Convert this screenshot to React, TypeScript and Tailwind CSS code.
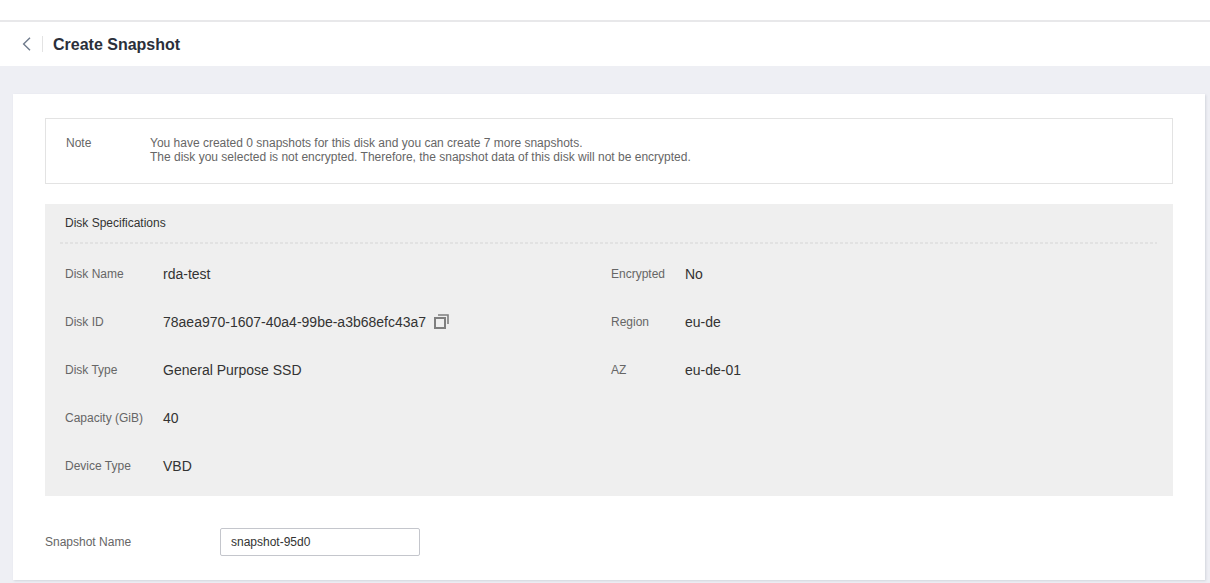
import React from 'react';

const leftRows = [
  ['Disk Name', 'rda-test'],
  ['Disk ID', '78aea970-1607-40a4-99be-a3b68efc43a7'],
  ['Disk Type', 'General Purpose SSD'],
  ['Capacity (GiB)', '40'],
  ['Device Type', 'VBD'],
];

const rightRows = [
  ['Encrypted', 'No'],
  ['Region', 'eu-de'],
  ['AZ', 'eu-de-01'],
];

function BackIcon() {
  return (
    <svg width="9" height="14" viewBox="0 0 9 14" fill="none">
      <path d="M8 0.7L1.6 7L8 13.3" stroke="#6f7b8c" strokeWidth="1.4" />
    </svg>
  );
}

function CopyIcon() {
  return (
    <svg width="15" height="15" viewBox="0 0 15 15" fill="none" className="ml-[8px] -mt-[2px]">
      <rect x="1" y="4" width="10" height="10" stroke="#7f7f7f" strokeWidth="2" />
      <path d="M4 1H14V10" stroke="#7f7f7f" strokeWidth="1.6" />
    </svg>
  );
}

export default function App() {
  return (
    <div className="w-[1210px] h-[583px] overflow-hidden bg-[#eeeff4] font-['Liberation_Sans',Arial,sans-serif]">
      <div className="h-[22px] bg-white border-b-2 border-[#e8e8ea]" />
      <div className="h-[44px] bg-white flex items-center pl-[22px]">
        <BackIcon />
        <div className="ml-[11px] w-px h-[16px] bg-[#e3e3e3]" />
        <h1 className="ml-[10px] mt-[2px] text-[16px] leading-[20px] font-bold text-[#2b2f3a]">Create Snapshot</h1>
      </div>

      <div className="mt-[28px] ml-[13px] w-[1192px] h-[486px] bg-white shadow-[1px_1px_2px_rgba(200,202,212,0.7)] pt-[24px] px-[32px]">
        <div className="h-[66px] border border-[#e3e3e3] flex pl-[20px] pt-[17px] text-[12px] leading-[14px] text-[#666666]">
          <div className="w-[84px]">Note</div>
          <div>
            <p>You have created 0 snapshots for this disk and you can create 7 more snapshots.</p>
            <p>The disk you selected is not encrypted. Therefore, the snapshot data of this disk will not be encrypted.</p>
          </div>
        </div>

        <div className="mt-[20px] h-[292px] bg-[#efefef] px-[15px]">
          <div className="h-[38px] pl-[5px] pt-[12px] text-[12px] leading-[14px] text-[#333333]">
            Disk Specifications
          </div>
          <div className="h-[2px] w-[1097px] bg-[repeating-linear-gradient(90deg,#e2e2e2_0,#e2e2e2_3px,transparent_3px,transparent_5px)]" />
          <div className="flex pl-[5px] pt-[6px]">
            <div className="w-[546px]">
              {leftRows.map(([label, value]) => (
                <div key={label} className="h-[48px] flex items-center">
                  <div className="w-[98px] text-[12px] text-[#666666]">{label}</div>
                  <div className="text-[14px] text-[#333333]">{value}</div>
                  {label === 'Disk ID' && <CopyIcon />}
                </div>
              ))}
            </div>
            <div>
              {rightRows.map(([label, value]) => (
                <div key={label} className="h-[48px] flex items-center">
                  <div className="w-[74px] text-[12px] text-[#666666]">{label}</div>
                  <div className="text-[14px] text-[#333333]">{value}</div>
                </div>
              ))}
            </div>
          </div>
        </div>

        <div className="mt-[32px] flex items-center">
          <label className="w-[175px] text-[12px] text-[#666666]">Snapshot Name</label>
          <input
            readOnly
            value="snapshot-95d0"
            className="w-[200px] h-[28px] border border-[#c4c6cc] rounded-[2px] px-[10px] text-[12px] text-[#333333] outline-none bg-white"
          />
        </div>
      </div>
    </div>
  );
}
